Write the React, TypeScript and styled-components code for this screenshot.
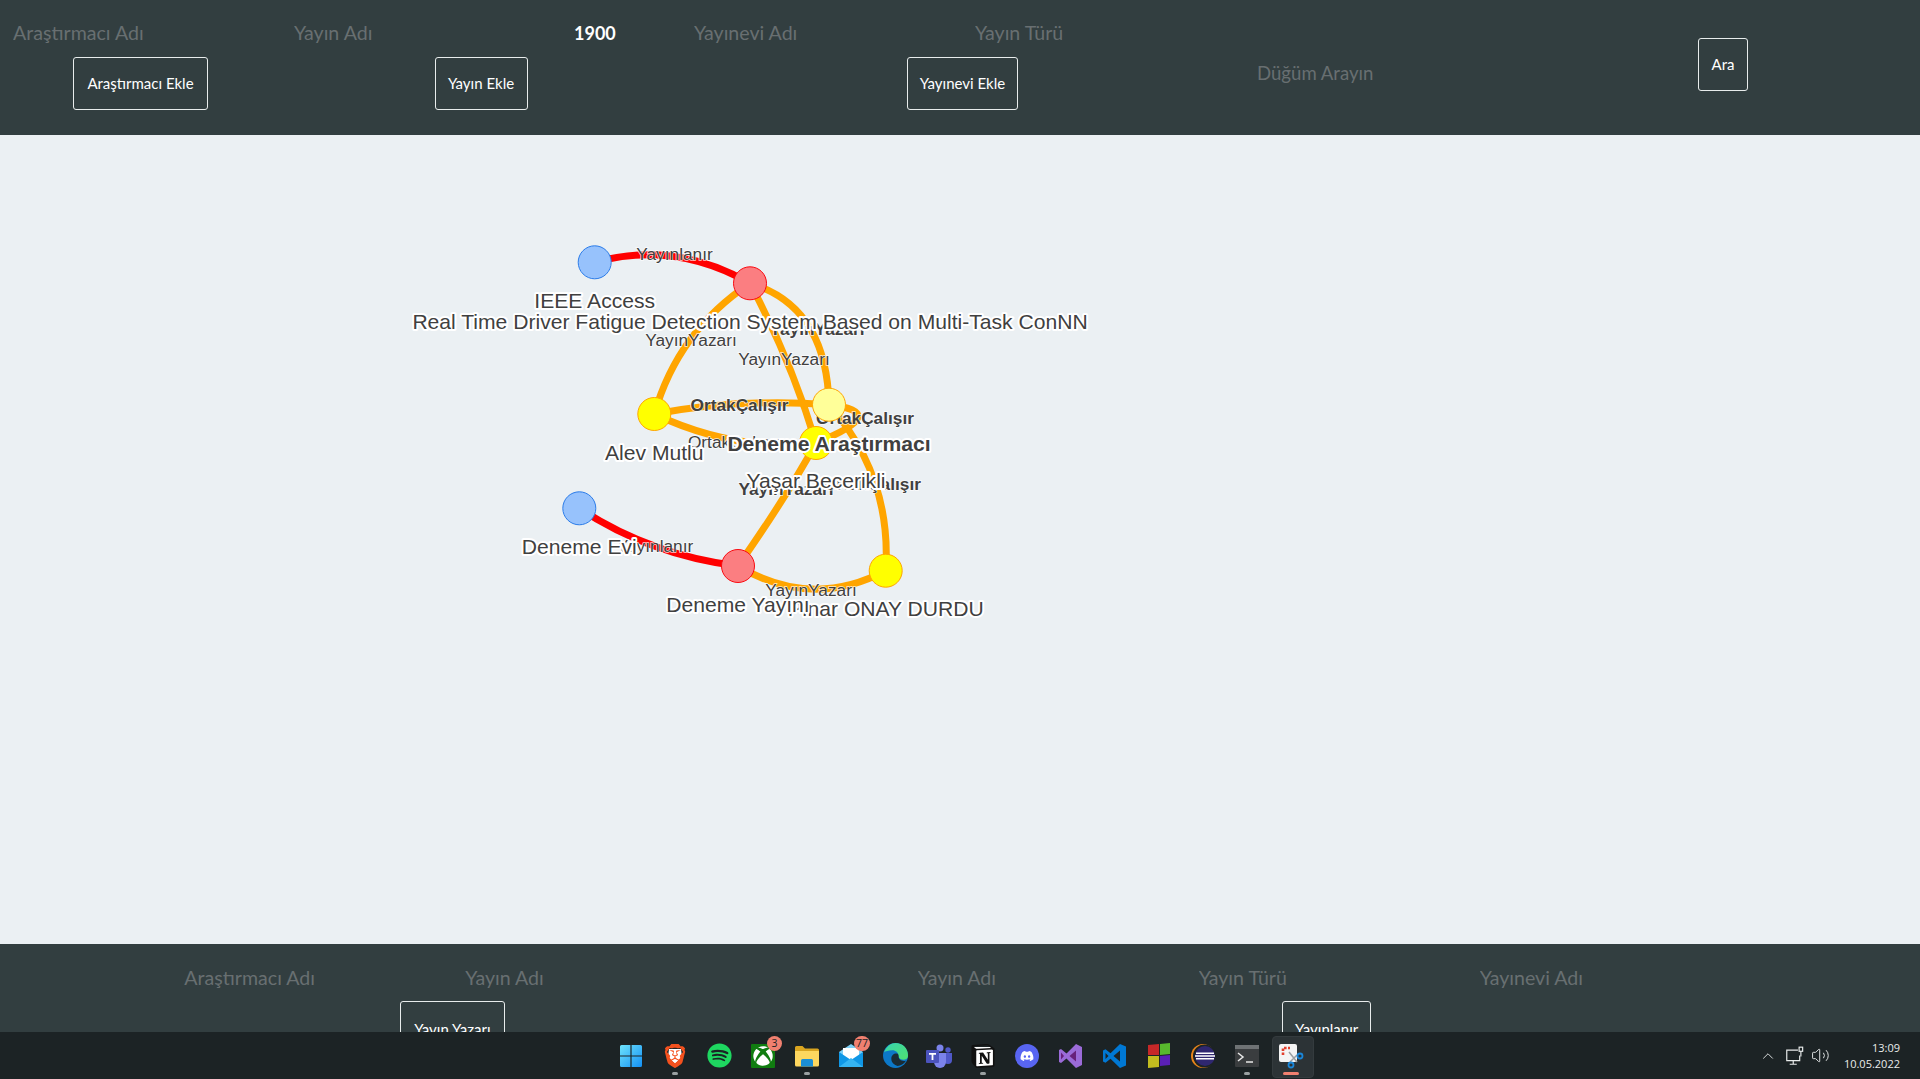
import React from "react";
import styled, { createGlobalStyle } from "styled-components";
import { FaSpotify, FaDiscord, FaXbox } from "react-icons/fa";
import { SiBrave, SiNotion } from "react-icons/si";
import { ChevronUp, Volume2 } from "lucide-react";

const Global = createGlobalStyle`
  html, body { margin: 0; padding: 0; height: 100%; overflow: hidden; background: #ebf0f3; }
  * { box-sizing: border-box; }
`;

const Page = styled.div`
  display: grid;
  grid-template-rows: 135px 809px 88px 47px;
  width: 1920px;
  height: 1079px;
  overflow: hidden;
  font-family: Lato, "Open Sans", sans-serif;
`;

const TopBar = styled.header`
  display: flex;
  background: #323e40;
  padding-top: 13px;
`;

const BottomBar = styled.section`
  display: flex;
  justify-content: space-evenly;
  background: #323e40;
  padding-top: 14px;
  overflow: hidden;
`;

const Form = styled.form<{ $width: number }>`
  display: flex;
  flex-direction: column;
  align-items: center;
  flex: 0 0 ${(p) => p.$width}px;
  width: ${(p) => p.$width}px;
`;

const Fields = styled.div`
  display: flex;
  width: 100%;
  gap: 0;
`;

const Field = styled.input<{ $width?: number }>`
  flex: 0 0 ${(p) => p.$width ?? 281}px;
  width: ${(p) => p.$width ?? 281}px;
  height: 40px;
  padding: 0 13px 1px;
  background: transparent;
  border: 0;
  outline: 0;
  color: #ffffff;
  font-family: Lato, "Open Sans", sans-serif;
  font-size: 19.6px;
  &::placeholder { color: #686f71; opacity: 1; }
  &[type="number"] {
    appearance: textfield;
    font-weight: 700;
    font-size: 18px;
    padding-left: 12px;
  }
`;

const Action = styled.button<{ $width: number; $height?: number }>`
  width: ${(p) => p.$width}px;
  height: ${(p) => p.$height ?? 53}px;
  flex: none;
  padding: 0 0 2px;
  background: transparent;
  border: 1px solid #e8ecec;
  border-radius: 3px;
  color: #ffffff;
  font-family: Lato, "Open Sans", sans-serif;
  font-size: 15px;
`;

const TopAction = styled(Action)`
  margin-top: 4px;
`;

const BottomAction = styled(Action)`
  margin-top: 3px;
  padding: 2px 0 0;
`;

const SearchForm = styled.form`
  flex: 1;
  display: flex;
  align-items: flex-start;
  gap: 173px;
  padding-top: 25px;
`;

const SearchField = styled(Field)`
  margin-top: 15px;
  font-size: 18.6px;
`;

const Canvas = styled.main`
  background: #ebf0f3;
  overflow: hidden;
`;

const Graph = styled.svg`
  display: block;
  width: 1920px;
  height: 809px;
`;

const Edge = styled.path<{ $kind: "orange" | "red" }>`
  fill: none;
  stroke: ${(p) => (p.$kind === "red" ? "#ff0000" : "#ffa500")};
  stroke-width: 7px;
`;

const EdgeText = styled.text<{ $bold?: boolean }>`
  font-family: "Liberation Sans", Arial, sans-serif;
  font-size: 17.3px;
  font-weight: ${(p) => (p.$bold ? 700 : 400)};
  fill: #404040;
  stroke: #ffffff;
  stroke-width: 1.5px;
  stroke-opacity: 0.8;
  paint-order: stroke;
  text-anchor: middle;
  dominant-baseline: central;
`;

const NodeDot = styled.circle<{ $fill: string; $line: string }>`
  fill: ${(p) => p.$fill};
  stroke: ${(p) => p.$line};
  stroke-width: 1px;
`;

const NodeText = styled.text<{ $bold?: boolean }>`
  font-family: "Liberation Sans", Arial, sans-serif;
  font-size: 21.1px;
  font-weight: ${(p) => (p.$bold ? 700 : 400)};
  fill: #404040;
  stroke: #ffffff;
  stroke-width: 4px;
  stroke-linejoin: round;
  paint-order: stroke;
  text-anchor: middle;
  dominant-baseline: central;
`;

const TaskBar = styled.footer`
  display: grid;
  grid-template-columns: 1fr auto 1fr;
  align-items: stretch;
  background: #1c2325;
`;

const Dock = styled.div`
  grid-column: 2;
  display: flex;
  padding-left: 2px;
`;

const Tile = styled.div`
  position: relative;
  width: 44px;
  height: 47px;
  display: flex;
  align-items: center;
  justify-content: center;
`;

const ActiveTile = styled(Tile)`
  &::before {
    content: "";
    position: absolute;
    left: 3px;
    top: 4px;
    width: 40px;
    height: 40px;
    border-radius: 4px;
    background: #2c3336;
    border: 1px solid #343b3e;
  }
  & > svg { position: relative; }
`;

const RunDot = styled.span`
  position: absolute;
  left: 19px;
  bottom: 4px;
  width: 6px;
  height: 3px;
  border-radius: 2px;
  background: #9aa0a2;
`;

const ActiveBar = styled.span`
  position: absolute;
  left: 14px;
  bottom: 4px;
  width: 16px;
  height: 3px;
  border-radius: 2px;
  background: #f08070;
`;

const Badge = styled.span`
  position: absolute;
  top: 4px;
  right: 3px;
  min-width: 15px;
  height: 15px;
  padding: 0 2px;
  border-radius: 8px;
  background: #f08070;
  color: #1c2325;
  font: 10.5px/15px "Open Sans", sans-serif;
  text-align: center;
`;

const Tray = styled.div`
  grid-column: 3;
  justify-self: end;
  display: flex;
  align-items: center;
  color: #e9ecec;
  padding-right: 20px;
`;

const TrayIcons = styled.div`
  display: flex;
  align-items: center;
  gap: 6px;
  margin-right: 14px;
`;

const TrayChevron = styled(ChevronUp)`
  margin-right: 2px;
`;

const Clock = styled.div`
  display: flex;
  flex-direction: column;
  align-items: flex-end;
  gap: 3px;
  font: 11px/13px "Open Sans", sans-serif;
`;

const edges: { d: string; kind: "orange" | "red" }[] = [
  { d: "M594.7 262.3 Q675 240 750 283.3", kind: "red" },
  { d: "M579.3 508.3 Q650 555 738 566", kind: "red" },
  { d: "M750 283.3 Q678 331 654.3 414", kind: "orange" },
  { d: "M750 283.3 Q826.5 306 829 404.7", kind: "orange" },
  { d: "M750 283.3 Q791 360 816 443", kind: "orange" },
  { d: "M654.3 414 Q742 398 829 404.7", kind: "orange" },
  { d: "M654.3 414 Q735 452 816 443", kind: "orange" },
  { d: "M829 404.7 Q893 412 816 443", kind: "orange" },
  { d: "M829 404.7 Q892 476 885.7 570.7", kind: "orange" },
  { d: "M816 443 Q787 496 738 566", kind: "orange" },
  { d: "M738 566 Q812 610 885.7 570.7", kind: "orange" },
];

const edgeLabels = [
  { x: 674.5, y: 253.5, t: "Yayınlanır" },
  { x: 655, y: 546, t: "Yayınlanır" },
  { x: 691, y: 339.5, t: "YayınYazarı" },
  { x: 784, y: 359, t: "YayınYazarı" },
  { x: 817, y: 329, t: "YayınYazarı", bold: true },
  { x: 786, y: 488.5, t: "YayınYazarı", bold: true },
  { x: 811, y: 589.5, t: "YayınYazarı" },
  { x: 739.5, y: 404.5, t: "OrtakÇalışır", bold: true },
  { x: 865, y: 417.5, t: "OrtakÇalışır", bold: true },
  { x: 734, y: 442, t: "OrtakÇalışır" },
  { x: 872, y: 483.5, t: "OrtakÇalışır", bold: true },
];

const BLUE = { fill: "#97c2fc", line: "#2b7ce9" };
const RED = { fill: "#fb7e81", line: "#fa0a10" };
const YELLOW = { fill: "#ffff00", line: "#ffa500" };
const PALE = { fill: "#ffff99", line: "#ffa500" };

const nodes = [
  { x: 594.7, y: 262.3, ...BLUE },
  { x: 579.3, y: 508.3, ...BLUE },
  { x: 750, y: 283.3, ...RED },
  { x: 738, y: 566, ...RED },
  { x: 654.3, y: 414, ...YELLOW },
  { x: 816, y: 443, ...YELLOW },
  { x: 885.7, y: 570.7, ...YELLOW },
  { x: 829, y: 404.7, ...PALE },
];

const nodeLabels = [
  { x: 885.7, y: 608, t: "Pınar ONAY DURDU" },
  { x: 594.7, y: 300, t: "IEEE Access" },
  { x: 750, y: 321, t: "Real Time Driver Fatigue Detection System Based on Multi-Task ConNN" },
  { x: 579.3, y: 546, t: "Deneme Evi" },
  { x: 738, y: 604, t: "Deneme Yayını" },
  { x: 654.3, y: 452, t: "Alev Mutlu" },
  { x: 816, y: 480, t: "Yaşar Becerikli" },
  { x: 829, y: 443, t: "Deneme Araştırmacı", bold: true },
];

const WinIcon = () => (
  <svg width="24" height="24" viewBox="0 0 24 24">
    <defs>
      <linearGradient id="win" x1="0" y1="0" x2="1" y2="1">
        <stop offset="0" stopColor="#6fe3fb" />
        <stop offset="1" stopColor="#1390f5" />
      </linearGradient>
    </defs>
    <path fill="url(#win)" d="M1 2.5A1.5 1.5 0 0 1 2.5 1H11.4v10.4H1zM12.6 1h8.9A1.5 1.5 0 0 1 23 2.5v8.9H12.6zM1 12.6h10.4V23H2.5A1.5 1.5 0 0 1 1 21.5zM12.6 12.6H23v8.9A1.5 1.5 0 0 1 21.5 23h-8.9z" />
  </svg>
);

const BraveIcon = () => (
  <svg width="24" height="26" viewBox="0 0 24 24">
    <path fill="#ffffff" d="M6 5h12l1 8-7 7-7-7z" />
    <SiBrave x="0" y="0" size={24} color="#f4511e" />
  </svg>
);

const XboxIcon = () => (
  <svg width="24" height="24" viewBox="0 0 24 24">
    <rect width="24" height="24" fill="#107c10" rx="1" />
    <FaXbox x="2" y="2" size={20} color="#ffffff" />
  </svg>
);

const FolderIcon = () => (
  <svg width="24" height="24" viewBox="0 0 24 24">
    <path fill="#d9a520" d="M0 3.5A1.5 1.5 0 0 1 1.5 2h6L10 4.5h12.5A1.5 1.5 0 0 1 24 6v3H0z" />
    <path fill="#fdd75f" d="M0 7h24v14a1.5 1.5 0 0 1-1.5 1.5h-21A1.5 1.5 0 0 1 0 21z" />
    <path fill="#1b8fd6" d="M6 16.5A1.5 1.5 0 0 1 7.5 15h9a1.5 1.5 0 0 1 1.5 1.5v6H6z" />
  </svg>
);

const MailIcon = () => (
  <svg width="24" height="24" viewBox="0 0 24 24">
    <path fill="#7ed0f6" d="M0 8 12 0l12 8v4H0z" />
    <path fill="#ffffff" d="M4 4h16v11H4z" />
    <path fill="#0f97e6" d="M0 8l12 8 12-8v15H0z" />
    <path fill="#35b4f2" d="M0 23 12 14l12 9z" />
  </svg>
);

const EdgeIcon = () => (
  <svg width="25" height="25" viewBox="0 0 24 24">
    <defs>
      <linearGradient id="edgeA" x1="0" y1="0" x2="1" y2="1">
        <stop offset="0" stopColor="#38d4b0" />
        <stop offset="1" stopColor="#4fe070" />
      </linearGradient>
    </defs>
    <circle cx="12" cy="12" r="12" fill="#0c78c8" />
    <path fill="url(#edgeA)" d="M1 9C3 3 8 0 12 0c7 0 12 5 12 12 0 2-1 4-4 4-3 0-5-1-5-3 0-4-3-6-6-6-4 0-7 1-8 2z" />
    <path fill="#1c2325" opacity=".9" d="M8 15c0-3 2-5 5-5 2 0 2 2 2 3 0 3 3 5 7 4-2 3-5 5-8 5-3-1-6-3-6-7z" />
  </svg>
);

const TeamsIcon = () => (
  <svg width="26" height="24" viewBox="0 0 26 24">
    <circle cx="14" cy="4" r="3.5" fill="#7b83eb" />
    <circle cx="22" cy="6" r="2.7" fill="#5059c9" />
    <path fill="#5059c9" d="M18 9h8v7a4 4 0 0 1-8 0z" />
    <path fill="#7b83eb" d="M8 9h12v9a6 6 0 0 1-12 0z" />
    <rect y="6" width="13" height="13" rx="1" fill="#4b53bc" />
    <path fill="#ffffff" d="M3 9h7v1.8H7.4V16H5.6v-5.2H3z" />
  </svg>
);

const NotionIcon = () => (
  <svg width="24" height="24" viewBox="0 0 24 24">
    <path fill="#ffffff" d="M3 3h16l3 3v17H5l-2-3z" />
    <SiNotion x="0" y="0" size={24} color="#111111" />
  </svg>
);

const DiscordIcon = () => (
  <svg width="24" height="24" viewBox="0 0 24 24">
    <circle cx="12" cy="12" r="12" fill="#5865f2" />
    <FaDiscord x="5" y="5" size={14} color="#ffffff" />
  </svg>
);

const VsIcon = () => (
  <svg width="24" height="24" viewBox="0 0 24 24">
    <path fill="#9b6bd8" d="M17 0l6 3v18l-6 3-9.5-9.5L2 19l-2-1V6l2-1 5.5 4.5z" />
    <path fill="#68217a" d="M17 6.5 10.5 12 17 17.5zM2 8.5v7L5 12z" />
  </svg>
);

const VsCodeIcon = () => (
  <svg width="24" height="24" viewBox="0 0 24 24">
    <path fill="#0078d4" d="M17 0l6 2.5v19L17 24 7.5 14.8l-5 4L0 17.5v-11l2.5-1.3 5 4L17 0z" />
    <path fill="#1c2325" d="M17 6.5 10.5 12 17 17.5zM2.5 9v6L5.5 12z" />
  </svg>
);

const TilesIcon = () => (
  <svg width="24" height="26" viewBox="0 0 24 26">
    <path fill="#c62828" d="M1 2l11-1v11H1z" />
    <path fill="#58b82d" d="M13 1l10-1v11l-10 1z" />
    <path fill="#c2bd1f" d="M1 13h11v11L1 25z" />
    <path fill="#5a1fb5" d="M13 13l10-1v10l-10 1z" />
  </svg>
);

const EclipseIcon = () => (
  <svg width="24" height="24" viewBox="0 0 24 24">
    <circle cx="12" cy="12" r="12" fill="#e8841a" />
    <circle cx="13.5" cy="12" r="11.5" fill="#1c2325" />
    <circle cx="14" cy="12" r="10" fill="#2f2770" />
    <path fill="#ffffff" d="M5 8.5h18V10H5zM4 11.3h20v1.5H4zM5 14.1h18v1.5H5z" />
  </svg>
);

const TerminalIcon = () => (
  <svg width="24" height="24" viewBox="0 0 24 24">
    <rect y="1" width="24" height="22" rx="1" fill="#3a3d3f" />
    <rect y="1" width="24" height="4" fill="#6e7274" />
    <path fill="none" stroke="#e8e8e8" strokeWidth="1.5" d="M3 9l5 4-5 4" />
    <path stroke="#e8e8e8" strokeWidth="1.5" d="M11 18h7" />
  </svg>
);

const SnipIcon = () => (
  <svg width="26" height="26" viewBox="0 0 26 26">
    <rect x="1" y="1" width="18" height="18" rx="2" fill="#f4f4f4" />
    <path fill="none" stroke="#e2402f" strokeWidth="2.6" strokeDasharray="2.6 1.4" d="M5 12V5h7" />
    <path stroke="#9a9fa3" strokeWidth="1.5" d="M11 9l8 10M19 12l-7 7" />
    <circle cx="22" cy="13" r="2.5" fill="none" stroke="#1a86d8" strokeWidth="1.8" />
    <circle cx="13" cy="22" r="2.5" fill="none" stroke="#1a86d8" strokeWidth="1.8" />
  </svg>
);

const NetworkIcon = () => (
  <svg width="20" height="20" viewBox="0 0 17 17" fill="none" stroke="#e9ecec" strokeWidth="1">
    <path d="M11 3.5H1.5v9h11V8M7 12.5V15M4 15.5h6" />
    <rect x="12" y="1" width="3" height="3.5" />
    <path d="M13.5 4.5V9" />
  </svg>
);

const dock = [
  { icon: <WinIcon /> },
  { icon: <BraveIcon />, running: true },
  { icon: <FaSpotify size={25} color="#1ed760" /> },
  { icon: <XboxIcon />, badge: "3" },
  { icon: <FolderIcon />, running: true },
  { icon: <MailIcon />, badge: "77" },
  { icon: <EdgeIcon /> },
  { icon: <TeamsIcon /> },
  { icon: <NotionIcon />, running: true },
  { icon: <DiscordIcon /> },
  { icon: <VsIcon /> },
  { icon: <VsCodeIcon /> },
  { icon: <TilesIcon /> },
  { icon: <EclipseIcon /> },
  { icon: <TerminalIcon />, running: true },
];

export default function App() {
  return (
    <Page>
      <Global />
      <TopBar>
        <Form $width={281}>
          <Fields>
            <Field placeholder="Araştırmacı Adı" />
          </Fields>
          <TopAction type="button" $width={135}>Araştırmacı Ekle</TopAction>
        </Form>
        <Form $width={400}>
          <Fields>
            <Field placeholder="Yayın Adı" />
            <Field type="number" $width={119} defaultValue={1900} />
          </Fields>
          <TopAction type="button" $width={93}>Yayın Ekle</TopAction>
        </Form>
        <Form $width={563}>
          <Fields>
            <Field placeholder="Yayınevi Adı" />
            <Field placeholder="Yayın Türü" />
          </Fields>
          <TopAction type="button" $width={111}>Yayınevi Ekle</TopAction>
        </Form>
        <SearchForm>
          <SearchField placeholder="Düğüm Arayın" />
          <Action type="button" $width={50}>Ara</Action>
        </SearchForm>
      </TopBar>
      <Canvas>
        <Graph viewBox="0 135 1920 809">
          {edges.map((e) => (
            <Edge key={e.d} d={e.d} $kind={e.kind} />
          ))}
          {edgeLabels.map((l) => (
            <EdgeText key={`${l.x}-${l.y}`} x={l.x} y={l.y} $bold={l.bold}>
              {l.t}
            </EdgeText>
          ))}
          {nodes.map((n) => (
            <NodeDot key={`${n.x}-${n.y}`} cx={n.x} cy={n.y} r={16.5} $fill={n.fill} $line={n.line} />
          ))}
          {nodeLabels.map((l) => (
            <NodeText key={l.t} x={l.x} y={l.y} $bold={l.bold}>
              {l.t}
            </NodeText>
          ))}
        </Graph>
      </Canvas>
      <BottomBar>
        <Form $width={562}>
          <Fields>
            <Field placeholder="Araştırmacı Adı" />
            <Field placeholder="Yayın Adı" />
          </Fields>
          <BottomAction type="button" $width={105}>Yayın Yazarı</BottomAction>
        </Form>
        <Form $width={844}>
          <Fields>
            <Field placeholder="Yayın Adı" />
            <Field placeholder="Yayın Türü" />
            <Field placeholder="Yayınevi Adı" />
          </Fields>
          <BottomAction type="button" $width={89}>Yayınlanır</BottomAction>
        </Form>
      </BottomBar>
      <TaskBar>
        <Dock>
          {dock.map((item, i) => (
            <Tile key={i}>
              {item.icon}
              {item.badge && <Badge>{item.badge}</Badge>}
              {item.running && <RunDot />}
            </Tile>
          ))}
          <ActiveTile>
            <SnipIcon />
            <ActiveBar />
          </ActiveTile>
        </Dock>
        <Tray>
          <TrayIcons>
            <TrayChevron size={18} strokeWidth={1.2} />
            <NetworkIcon />
            <Volume2 size={19} strokeWidth={1.2} />
          </TrayIcons>
          <Clock>
            <span>13:09</span>
            <span>10.05.2022</span>
          </Clock>
        </Tray>
      </TaskBar>
    </Page>
  );
}
